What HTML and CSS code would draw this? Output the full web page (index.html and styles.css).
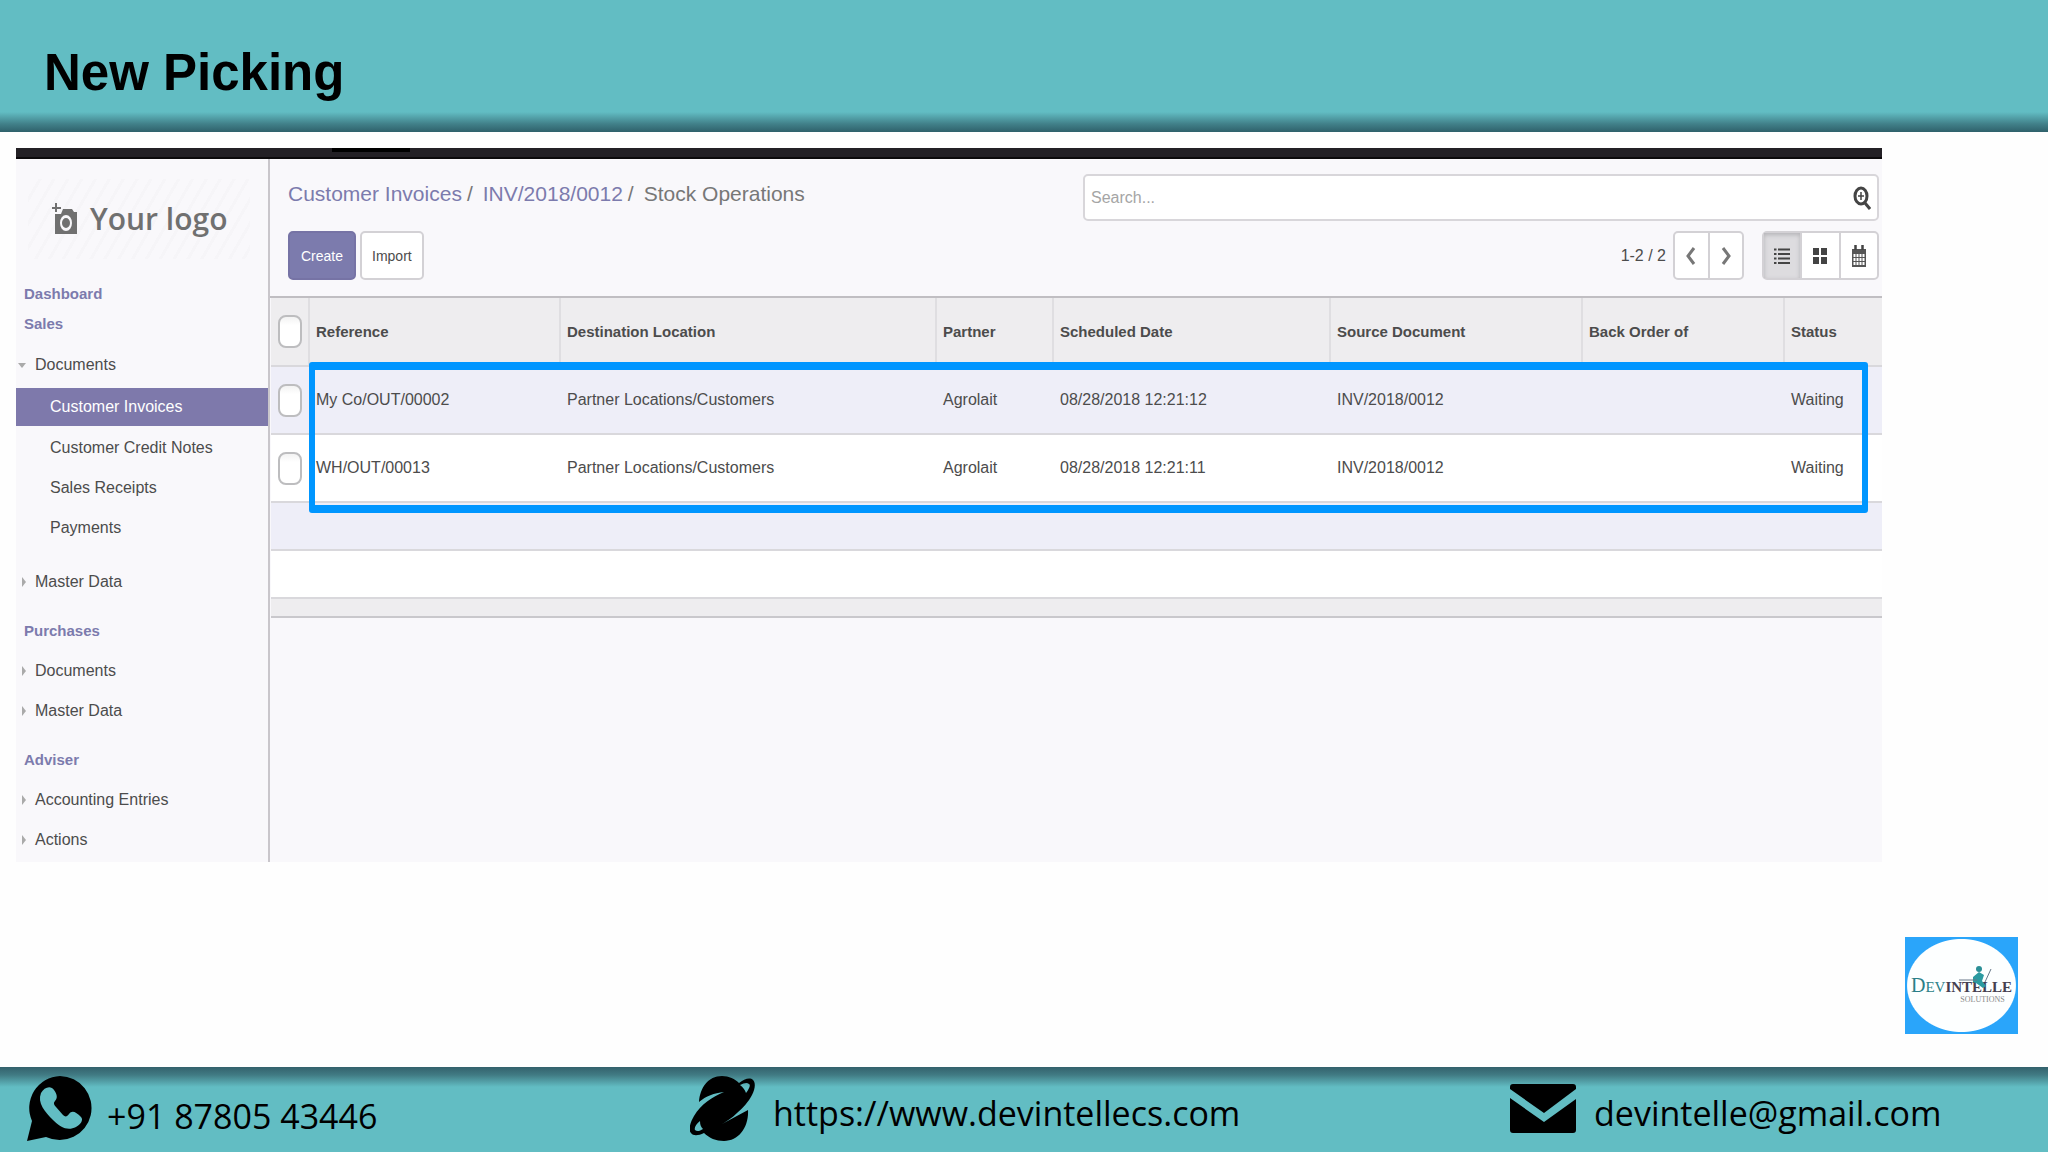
FILE: index.html
```html
<!DOCTYPE html>
<html lang="en">
<head>
<meta charset="utf-8">
<title>New Picking</title>
<link rel="stylesheet" href="styles.css">
</head>
<body>
<header class="banner"><h1>New Picking</h1></header>

<main class="stage">
  <div class="app">
    <div class="topbar"><span class="topbar-tab"></span></div>
    <div class="columns">
      <nav class="sidebar">
        <div class="company">
          <svg class="camera" viewBox="0 0 26 34" aria-hidden="true">
            <path d="M4 1v9M0 6h9" stroke="#707070" stroke-width="2"/>
            <path fill="#707070" fill-rule="evenodd" d="M11 7h9l2 3h3v22H3V12h6zM14 13a6 8 0 1 0 0 16a6 8 0 1 0 0-16zM14 16a4 5 0 1 1 0 10a4 5 0 1 1 0-10z"/>
          </svg>
          <span>Your logo</span>
        </div>
        <a class="section tight" href="#">Dashboard</a>
        <a class="section tight" href="#">Sales</a>
        <a class="item open" href="#">Documents</a>
        <a class="sub active" href="#">Customer Invoices</a>
        <a class="sub" href="#">Customer Credit Notes</a>
        <a class="sub" href="#">Sales Receipts</a>
        <a class="sub last" href="#">Payments</a>
        <a class="item" href="#">Master Data</a>
        <a class="section" href="#">Purchases</a>
        <a class="item" href="#">Documents</a>
        <a class="item" href="#">Master Data</a>
        <a class="section" href="#">Adviser</a>
        <a class="item" href="#">Accounting Entries</a>
        <a class="item" href="#">Actions</a>
      </nav>

      <section class="content">
        <div class="panel">
          <div class="panel-row">
            <div class="crumbs">
              <a href="#">Customer Invoices</a><span class="slash">/</span>
              <a href="#">INV/2018/0012</a><span class="slash">/</span>
              <span>Stock Operations</span>
            </div>
            <div class="search">
              <input type="text" placeholder="Search..." aria-label="Search">
              <svg viewBox="0 0 18 24" aria-hidden="true">
                <ellipse cx="8" cy="10" rx="6" ry="8" fill="none" stroke="#444" stroke-width="3"/>
                <path d="M12 17l5 6" stroke="#444" stroke-width="3"/>
                <path d="M8 6v8M5 10h6" stroke="#444" stroke-width="1.5"/>
              </svg>
            </div>
          </div>
          <div class="panel-row">
            <div class="actions">
              <button class="btn primary" type="button">Create</button>
              <button class="btn" type="button">Import</button>
            </div>
            <div class="tools">
              <span class="count">1-2 / 2</span>
              <div class="group pager">
                <button type="button" aria-label="Previous"><svg width="12" height="20" viewBox="0 0 12 20"><path d="M9 2L3 10l6 8" fill="none" stroke="#777" stroke-width="3"/></svg></button>
                <button type="button" aria-label="Next"><svg width="12" height="20" viewBox="0 0 12 20"><path d="M3 2l6 8-6 8" fill="none" stroke="#777" stroke-width="3"/></svg></button>
              </div>
              <div class="group views">
                <button class="on" type="button" aria-label="List"><svg width="16" height="18" viewBox="0 0 16 18"><path d="M0 2.500h2.500M4 2.500h12M0 7h2.500M4 7h12M0 11.500h2.500M4 11.500h12M0 16h2.500M4 16h12" stroke="#444" stroke-width="2"/></svg></button>
                <button type="button" aria-label="Kanban"><svg width="14" height="18" viewBox="0 0 14 18"><path d="M0 1h6v7H0zM8 1h6v7H8zM0 10h6v7H0zM8 10h6v7H8z" fill="#444"/></svg></button>
                <button type="button" aria-label="Calendar"><svg width="14" height="22" viewBox="0 0 14 22"><path d="M0 4h14v18H0z" fill="#555"/><path d="M3.500 0v5M10.500 0v5" stroke="#444" stroke-width="2.500"/><path d="M1.500 9h2v3h-2zM4.500 9h2v3h-2zM7.500 9h2v3h-2zM10.500 9h2v3h-2zM1.500 13h2v3h-2zM4.500 13h2v3h-2zM7.500 13h2v3h-2zM10.500 13h2v3h-2zM1.500 17h2v3h-2zM4.500 17h2v3h-2zM7.500 17h2v3h-2zM10.500 17h2v3h-2z" fill="#fff"/></svg></button>
              </div>
            </div>
          </div>
        </div>

        <div class="list">
          <table>
            <colgroup><col class="c-check"><col class="c-ref"><col><col class="c-partner"><col class="c-date"><col class="c-source"><col class="c-back"><col class="c-status"></colgroup>
            <thead>
              <tr><th><input type="checkbox" aria-label="Select all"></th><th>Reference</th><th>Destination Location</th><th>Partner</th><th>Scheduled Date</th><th>Source Document</th><th>Back Order of</th><th>Status</th></tr>
            </thead>
            <tbody>
              <tr><td><input type="checkbox" aria-label="Select My Co/OUT/00002"></td><td>My Co/OUT/00002</td><td>Partner Locations/Customers</td><td>Agrolait</td><td>08/28/2018 12:21:12</td><td>INV/2018/0012</td><td></td><td>Waiting</td></tr>
              <tr><td><input type="checkbox" aria-label="Select WH/OUT/00013"></td><td>WH/OUT/00013</td><td>Partner Locations/Customers</td><td>Agrolait</td><td>08/28/2018 12:21:11</td><td>INV/2018/0012</td><td></td><td>Waiting</td></tr>
              <tr class="empty"><td colspan="8"></td></tr>
              <tr class="empty"><td colspan="8"></td></tr>
            </tbody>
            <tfoot><tr><td colspan="8"></td></tr></tfoot>
          </table>
          <div class="highlight"></div>
        </div>
      </section>
    </div>
  </div>

  <div class="brand">
    <svg class="person" viewBox="0 0 40 28" aria-hidden="true">
      <circle cx="20" cy="4" r="3" fill="#2b8f96"/>
      <path d="M14 12l6-5 5 3-2 6 4 5-3 2-7-5-3-1z" fill="#2b9aa0"/>
      <path d="M32 4l-6 13M0 15h18" stroke="#678" stroke-width="1" fill="none"/>
    </svg>
    <div class="brand-name"><span class="teal"><b>D</b>EV</span><strong>INTELLE</strong></div>
    <div class="brand-sub">SOLUTIONS</div>
  </div>
</main>

<footer class="contact">
  <a class="phone" href="tel:+918780543446">
    <svg width="65" height="65" viewBox="0 0 65 65" aria-hidden="true">
      <path d="M33 0a32 32 0 1 1-14 61L0 65l5-20A32 32 0 0 1 33 0z"/>
      <path fill="#62bdc3" d="M14 17c3-6 10-8 13-3 3 4 4 8 1 11-2 2-1 4 1 6l7 8c2 2 4 2 6-1 3-4 7-2 12 3 3 3-1 8-5 10-8 4-15 1-23-7C18 36 10 27 14 17z"/>
    </svg>
    <span>+91 87805 43446</span>
  </a>
  <a class="web" href="https://www.devintellecs.com">
    <svg width="65" height="65" viewBox="0 0 65 65" aria-hidden="true">
      <path fill-rule="evenodd" d="M9 26C10 12 18 0 32 0c7 0 13 3 17 7 5-4 11-6 14-3 3 3 2 9-1 15-3 6-9 13-15 18-5 5-10 8-15 11l26-14c1 17-9 31-24 31-8 0-15-3-20-8-6 3-11 3-13 0-3-3-1-10 3-17C11 28 22 21 34 16c-10 1-18 4-25 10zM50 9c3 2 5 5 6 8 3-4 5-8 3-9-2-2-5-1-9 1zM5 54c2 2 5 1 8-1-2-2-3-4-3-8-4 3-6 7-5 9z"/>
    </svg>
    <span>https://www.devintellecs.com</span>
  </a>
  <a class="mail" href="mailto:devintelle@gmail.com">
    <svg width="66" height="49" viewBox="0 0 66 49" aria-hidden="true">
      <path d="M3 0h60q3 0 3 3v2L34 29 0 5V3q0-3 3-3zM0 14l34 24 32-23v31q0 3-3 3H3q-3 0-3-3z"/>
    </svg>
    <span>devintelle@gmail.com</span>
  </a>
</footer>
</body>
</html>
```

FILE: styles.css
```css
* { box-sizing: border-box; }

body {
  margin: 0;
  min-height: 100vh;
  display: flex;
  flex-direction: column;
  background: #fefefe;
  color: #4c4c4c;
  font: 16px/24px "Liberation Sans", sans-serif;
}

a { color: inherit; text-decoration: none; }
button, input { font: inherit; color: inherit; margin: 0; }

.banner {
  padding: 45px 44px 31px;
  background: linear-gradient(to top, #2f616b, #418089 8px, #62bdc3 20px);
}
.banner h1 {
  margin: 0;
  color: #000;
  font: bold 51px/56px "Liberation Sans", sans-serif;
}

.stage {
  flex: 1;
  display: flex;
  flex-direction: column;
  padding: 16px 0 0 16px;
}

.app { margin-right: 166px; background: #f9f8fb; }
.topbar { height: 11px; background: #232025; border-bottom: 2px solid #0c0a0c; }
.topbar-tab { display: block; width: 78px; height: 4px; margin-left: 316px; background: #000; }
.columns { display: flex; }

.sidebar {
  width: 254px;
  padding-bottom: 2px;
  border-right: 2px solid #c9c6cb;
  display: flex;
  flex-direction: column;
}
.company {
  display: flex;
  align-items: center;
  gap: 12px;
  height: 80px;
  margin: 20px 18px 20px 12px;
  padding-left: 24px;
  color: #707070;
  font: 600 30px/40px "Open Sans", sans-serif;
  background: repeating-linear-gradient(120deg, #f9f8fb 0 9px, #f6f5f8 9px 12px);
}
.camera { width: 26px; height: 34px; }
.section {
  margin-top: 9px;
  padding-left: 8px;
  color: #7c7bad;
  font-weight: bold;
  font-size: 15px;
  line-height: 40px;
}
.section.tight { margin-top: 0; line-height: 30px; }
.item { display: flex; align-items: center; padding-left: 6px; line-height: 40px; }
.item::before {
  content: "";
  width: 0;
  margin-right: 9px;
  border: solid transparent;
  border-width: 5px 0 5px 4px;
  border-left-color: #aaa;
}
.item.open { margin: 6px 0 2px; padding-left: 2px; }
.item.open::before { border-width: 5px 4px 0; border-color: #aaa transparent transparent; }
.sub { padding-left: 34px; line-height: 40px; }
.sub.active { margin: 1px 0 2px; background: #7e79ab; color: #fff; line-height: 38px; }
.sub.last { margin-bottom: 14px; }

.content { flex: 1; min-width: 0; }
.panel {
  display: flex;
  flex-direction: column;
  gap: 10px;
  padding: 15px 3px 16px 18px;
  border-bottom: 2px solid #c0bec2;
}
.panel-row { display: flex; justify-content: space-between; }
.crumbs { display: flex; color: #777; font-size: 21px; line-height: 40px; }
.crumbs a { color: #7c7bad; }
.slash { margin: 0 10px 0 5px; }

.search {
  display: flex;
  align-items: center;
  width: 796px;
  height: 47px;
  padding: 0 6px;
  background: #fff;
  border: 2px solid #d8d6da;
  border-radius: 5px;
}
.search input { flex: 1; border: 0; padding: 0; background: none; outline: 0; }
.search input::placeholder { color: #a5a5a5; opacity: 1; }
.search svg { width: 18px; height: 24px; }

.actions { display: flex; gap: 4px; }
.btn {
  height: 49px;
  padding: 0 10px;
  font-size: 14px;
  background: #fff;
  border: 2px solid #d3d1d5;
  border-radius: 5px;
}
.btn.primary { padding: 0 11px; background: #7c7bad; border-color: #7673a5; color: #fff; }

.tools { display: flex; align-items: center; }
.count { margin-right: 7px; }
.group { display: flex; border: 2px solid #d3d1d5; border-radius: 5px; background: #fff; height: 49px; }
.group button {
  display: flex;
  align-items: center;
  justify-content: center;
  flex: 1;
  padding: 0;
  border: 0;
  background: none;
}
.group button + button { border-left: 2px solid #d3d1d5; }
.pager { width: 71px; margin-right: 18px; }
.views { width: 117px; }
.group .on { background: #dddcdf; box-shadow: inset 0 2px 4px #b5b4b8; }

.list { position: relative; padding-left: 1px; }
table { width: 100%; table-layout: fixed; border-collapse: collapse; background: #fff; }
.c-check { width: 38px; }
.c-ref { width: 251px; }
.c-partner { width: 117px; }
.c-date { width: 277px; }
.c-source { width: 252px; }
.c-back { width: 202px; }
.c-status { width: 98px; }
th, td { height: 68px; padding: 0 0 0 7px; text-align: left; border-bottom: 2px solid #d9d8dc; }
th { background: #eeedef; font-size: 15px; }
th + th { padding-left: 6px; border-left: 2px solid #dfdee1; }
tbody tr:nth-child(odd) { background: #eeeef8; }
.empty td { height: 48px; }
tfoot td { height: 19px; background: #eeedef; border-color: #c9c8cc; }

input[type="checkbox"] {
  appearance: none;
  display: block;
  width: 24px;
  height: 33px;
  border: 2px solid #bdbdbf;
  border-radius: 8px;
  background: linear-gradient(#f3f3f3, #fff 8px);
}

.highlight {
  position: absolute;
  top: 64px;
  left: 39px;
  right: 14px;
  height: 151px;
  border: solid #0096ff;
  border-width: 8px 6px;
  border-radius: 3px;
}

.brand {
  position: relative;
  align-self: flex-end;
  width: 113px;
  height: 97px;
  margin: auto 30px 33px 0;
  padding-top: 39px;
  text-align: center;
  background: radial-gradient(ellipse 55px 47px at center, #fdffff 98%, #2aa5fa 100%);
}
.brand-name { color: #454050; font: 15px/18px "Liberation Serif", serif; }
.brand-name b { font-size: 20px; font-weight: normal; }
.teal { color: #2b7f88; }
.brand-sub { padding-left: 42px; color: #888; font: 8px/8px "Liberation Serif", serif; }
.person { position: absolute; left: 54px; top: 28px; width: 40px; height: 28px; }

.contact {
  display: grid;
  grid-template-columns: 663fr 820fr 538fr;
  padding: 9px 0 11px 27px;
  background: linear-gradient(#33616c, #417b84 8px, #62bdc3 20px);
  color: #000;
  font: 34px/48px "Open Sans", sans-serif;
}
.contact a { display: flex; align-items: center; gap: 18px; }
.contact span { padding-top: 9px; }
.contact .phone { gap: 15px; }
.contact .phone span { padding-top: 14px; }
```
